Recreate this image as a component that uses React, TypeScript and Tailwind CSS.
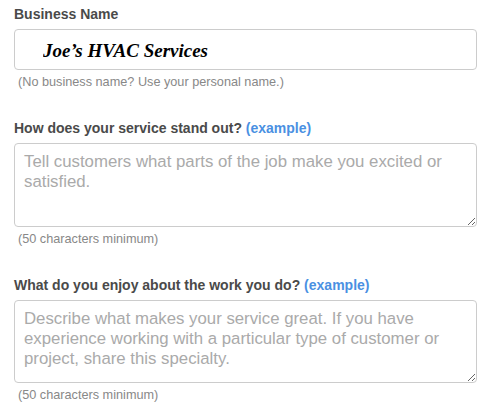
export default function App() {
  return (
    <div className="w-[504px] h-[419px] bg-white px-[14px] pt-1 font-['Liberation_Sans',Arial,sans-serif]">
      <label className="block text-[14px] leading-5 font-bold text-[#4a4a4a]">Business Name</label>
      <input
        type="text"
        defaultValue="Joe’s HVAC Services"
        className="mt-[5px] block w-[463px] h-[41px] rounded-[4px] border border-[#cccccc] bg-white pl-[28px] pt-[3px] text-[19px] font-bold italic text-black outline-none font-['Liberation_Serif','Times_New_Roman',serif]"
      />
      <p className="mt-[5px] ml-1 text-[12.7px] leading-[14px] text-[#888888]">(No business name? Use your personal name.)</p>

      <label className="mt-[29px] block text-[14px] leading-5 font-bold text-[#4a4a4a]">
        How does your service stand out? <a className="text-[#4a90e2]">(example)</a>
      </label>
      <textarea
        className="mt-[5px] block w-[463px] h-[84px] rounded-[4px] border border-[#cccccc] bg-white pl-[9px] pr-[6px] pt-[8px] text-[16.8px] leading-5 outline-none placeholder:text-[#aaaaaa]"
        placeholder="Tell customers what parts of the job make you excited or satisfied."
      />
      <p className="mt-[5px] ml-1 text-[12.7px] leading-[14px] text-[#888888]">(50 characters minimum)</p>

      <label className="mt-[29px] block text-[14px] leading-5 font-bold text-[#4a4a4a]">
        What do you enjoy about the work you do? <a className="text-[#4a90e2]">(example)</a>
      </label>
      <textarea
        className="mt-[5px] block w-[463px] h-[83px] rounded-[4px] border border-[#cccccc] bg-white pl-[9px] pr-[6px] pt-[8px] text-[16.8px] leading-5 outline-none placeholder:text-[#aaaaaa]"
        placeholder="Describe what makes your service great. If you have experience working with a particular type of customer or project, share this specialty."
      />
      <p className="mt-[5px] ml-1 text-[12.7px] leading-[14px] text-[#888888]">(50 characters minimum)</p>
    </div>
  );
}
